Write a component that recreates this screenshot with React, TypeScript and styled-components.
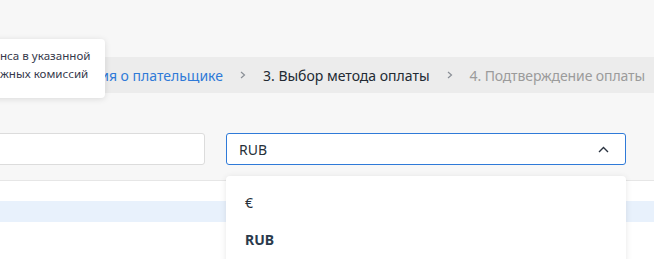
import styled, { createGlobalStyle } from "styled-components";

const GlobalStyle = createGlobalStyle`
    html, body {
        margin: 0;
        padding: 0;
        background: #f7f7f7;
        font-family: "Noto Sans", "Open Sans", sans-serif;
        overflow: hidden;
    }
`;

const Page = styled.div`
    position: relative;
    width: 654px;
    height: 259px;
    overflow: hidden;
`;

const Head = styled.div`
    background: #f7f7f7;
    padding-top: 57px;
`;

const Breadcrumbs = styled.nav`
    display: flex;
    align-items: center;
    justify-content: flex-end;
    gap: 17px;
    height: 36px;
    padding-right: 9px;
    background: #ececec;
    font-size: 14px;
    white-space: nowrap;
`;

const Crumb = styled.span<{ $state: "done" | "active" | "next" }>`
    color: ${(p) =>
        p.$state === "done" ? "#2f7ad8" : p.$state === "active" ? "#222a33" : "#9b9b9b"};
    letter-spacing: ${(p) => (p.$state === "next" ? "-0.1px" : "0")};
`;

const Sep = styled.svg`
    width: 6px;
    height: 8px;
    flex: none;
`;

const FormRow = styled.div`
    display: grid;
    grid-template-columns: 1fr 400px;
    gap: 21px;
    padding: 40px 28px 15px 0;
    border-bottom: 1px solid #e6e6e6;
`;

const Input = styled.div`
    height: 32px;
    box-sizing: border-box;
    margin-left: -10px;
    background: #fff;
    border: 1px solid #dcdcdc;
    border-radius: 3px;
`;

const Select = styled.div`
    position: relative;
    height: 32px;
    box-sizing: border-box;
    display: flex;
    align-items: center;
    justify-content: space-between;
    padding: 0 16px 0 12px;
    background: #fff;
    border: 1px solid #2f7ad8;
    border-radius: 3px;
    font-size: 14px;
    color: #26303a;
`;

const Body = styled.div`
    background: #fff;
    padding-top: 20px;
    height: 100px;
`;

const HighlightRow = styled.div`
    height: 21px;
    background: #e8f1fc;
`;

const Dropdown = styled.ul`
    position: absolute;
    top: 42px;
    left: -1px;
    width: 400px;
    height: 120px;
    margin: 0;
    padding: 8px 0 0;
    list-style: none;
    background: #fff;
    border-radius: 4px;
    box-shadow: 0 1px 6px rgba(0, 0, 0, 0.1);
    z-index: 2;
`;

const Option = styled.li<{ $selected?: boolean }>`
    height: 37px;
    display: flex;
    align-items: center;
    padding-left: 19px;
    font-size: 14px;
    font-weight: ${(p) => (p.$selected ? 700 : 400)};
    color: ${(p) => (p.$selected ? "#2a3a4c" : "#26303a")};
`;

const Tooltip = styled.div`
    position: absolute;
    top: 39px;
    left: -12px;
    width: 117px;
    box-sizing: border-box;
    padding: 8px 0 15px 12px;
    background: #fff;
    border-radius: 4px;
    box-shadow: 0 1px 6px rgba(0, 0, 0, 0.12);
    font-size: 11.6px;
    line-height: 18px;
    color: #363a4c;
    white-space: nowrap;
    overflow: hidden;
    z-index: 3;
`;

const Chevron = () => (
    <Sep viewBox="0 0 6 8">
        <path d="M1 1l3.5 3L1 7" fill="none" stroke="#8a8f96" strokeWidth="1.2" />
    </Sep>
);

export default function App() {
    return (
        <Page>
            <GlobalStyle />
            <Head>
                <Breadcrumbs>
                    <Crumb $state="done">2. Информация о плательщике</Crumb>
                    <Chevron />
                    <Crumb $state="active">3. Выбор метода оплаты</Crumb>
                    <Chevron />
                    <Crumb $state="next">4. Подтверждение оплаты</Crumb>
                </Breadcrumbs>
                <FormRow>
                    <Input />
                    <Select>
                        RUB
                        <svg width="11" height="7" viewBox="0 0 11 7">
                            <path d="M1 6l4.5-4.5L10 6" fill="none" stroke="#2a3340" strokeWidth="1.4" />
                        </svg>
                        <Dropdown>
                            <Option>€</Option>
                            <Option $selected>RUB</Option>
                        </Dropdown>
                    </Select>
                </FormRow>
            </Head>
            <Body>
                <HighlightRow />
            </Body>
            <Tooltip>
                нса в указанной
                <br />
                жных комиссий
            </Tooltip>
        </Page>
    );
}
